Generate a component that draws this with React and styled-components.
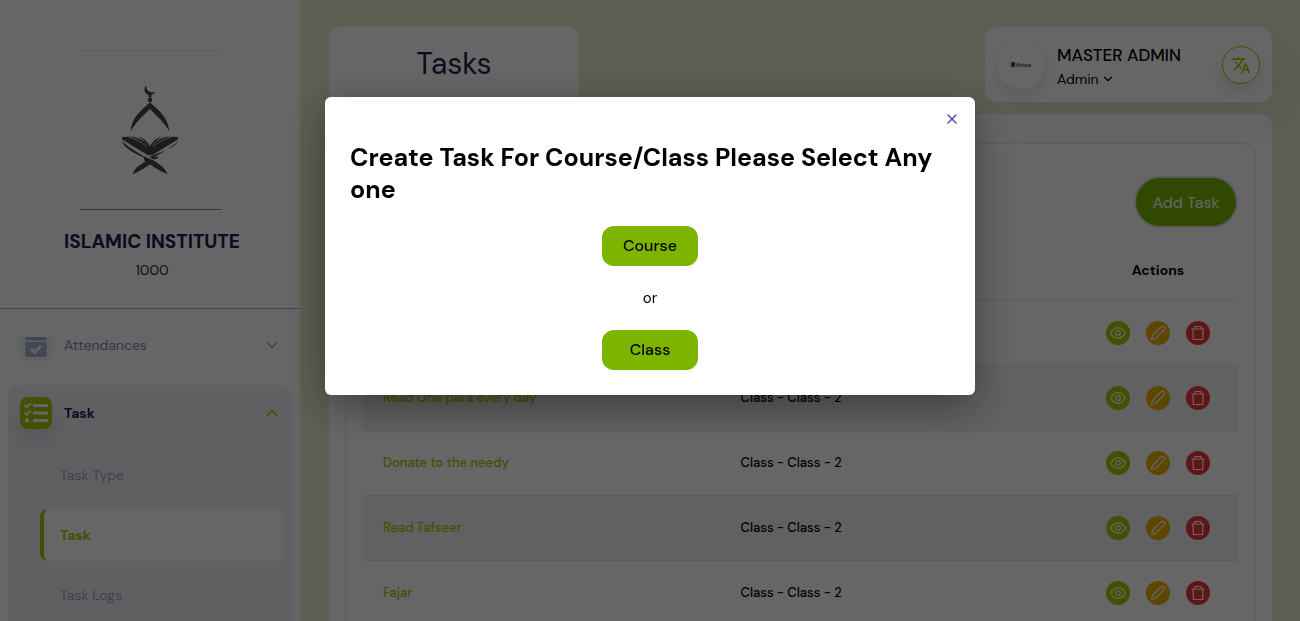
import React from "react";
import styled, { createGlobalStyle } from "styled-components";
import { ChevronDown, ChevronUp, X } from "lucide-react";
import { FaCalendarCheck, FaTasks } from "react-icons/fa";
import { MdTranslate } from "react-icons/md";

const tasks = [
  { name: "Read Quran", target: "Class - Class - 2" },
  { name: "Read One para every day", target: "Class - Class - 2" },
  { name: "Donate to the needy", target: "Class - Class - 2" },
  { name: "Read Tafseer", target: "Class - Class - 2" },
  { name: "Fajar", target: "Class - Class - 2" },
];

const subMenu = [
  { label: "Task Type" },
  { label: "Task", active: true },
  { label: "Task Logs" },
];

const InstituteLogo = () => (
  <svg width="144" height="160" viewBox="54 30 432 480" aria-hidden="true">
    <path d="M58 31.500H484" stroke="#ebebeb" strokeWidth="3" />
    <path d="M58 508.500H484" stroke="#8c8c8c" strokeWidth="3" />
    <g fill="#464646">
      <path d="M258 136C248 150 255 165 269 165C276 165 282 162 285 155C272 161 259 154 258 136Z" />
      <circle cx="270" cy="168" r="5" />
      <circle cx="270" cy="180" r="7" />
      <path d="M270 187C286 204 324 226 328 274C312 246 292 230 270 207C246 230 228 246 212 274C216 226 254 204 270 187Z" />
      <path d="M187 291L206 290C230 296 252 308 270 324C288 308 310 296 334 290L353 291L354 298C330 314 302 330 276 346L270 344L264 346C238 330 210 314 186 298Z" />
      <path d="M186 302C190 310 232 338 258 352C290 364 316 382 322 403C296 392 276 378 252 361V353C226 340 190 324 186 302Z" />
      <path d="M354 302C350 310 312 336 284 350L297 350L290 357L280 358L268 350C300 336 348 324 354 302Z" />
      <path d="M218 403C222 386 240 374 258 364L272 372C254 384 238 394 218 403Z" />
      <path d="M208 289C238 292 258 304 270 322L266 330C250 312 232 298 208 289Z" />
      <path d="M332 289C302 292 282 304 270 322L274 330C290 312 308 298 332 289Z" />
      <path d="M234 289C252 294 264 306 271 320L268 328C258 310 248 298 234 289Z" />
      <path d="M306 289C288 294 276 306 269 320L272 328C282 310 292 298 306 289Z" />
    </g>
    <g fill="none" stroke="#fff" strokeWidth="2">
      <path d="M206 291C232 298 250 310 260 322" />
      <path d="M334 291C308 298 290 310 280 322" />
      <path d="M226 290C246 296 256 306 262 316" />
      <path d="M314 290C294 296 284 306 278 316" />
    </g>
    <path d="M246 293C258 298 266 308 270 318C274 308 282 298 294 293V284H246Z" fill="#fff" />
  </svg>
);

const EyeIcon = () => (
  <svg width="16" height="16" viewBox="0 0 16 16" fill="none" stroke="currentColor" strokeWidth="1.200">
    <path d="M0.600 8C2.500 4.300 5 2.800 8 2.800S13.500 4.300 15.400 8C13.500 11.700 11 13.200 8 13.200S2.500 11.700 0.600 8Z" />
    <circle cx="8" cy="8" r="2.300" />
  </svg>
);

const PencilIcon = () => (
  <svg width="16" height="16" viewBox="0 0 16 16" fill="none" stroke="currentColor" strokeWidth="1.200" strokeLinejoin="round">
    <path d="M1.500 14.500L2.500 10.500L11.300 1.700Q12.700 0.600 14 2Q15.400 3.300 14.300 4.700L5.500 13.500Z" />
  </svg>
);

const TrashIcon = () => (
  <svg width="16" height="16" viewBox="0 0 16 16" fill="none" stroke="currentColor" strokeWidth="1.200">
    <path d="M1.500 4H14.500M5 4V1.500H11V4M3 4L3.300 14.500H12.700L13 4" />
  </svg>
);

const App = () => {
  return (
    <>
      <GlobalStyle />
      <Page>
        <Sidebar>
          <Brand>
            <InstituteLogo />
            <BrandName>ISLAMIC INSTITUTE</BrandName>
            <BrandCode>1000</BrandCode>
          </Brand>
          <MenuScroll>
            <MenuGroup $first>
              <MenuButton type="button">
                <IconBox>
                  <FaCalendarCheck size={24} />
                </IconBox>
                <MenuLabel>Attendances</MenuLabel>
                <ChevronDown size={18} strokeWidth={2} color="#a0a4ac" />
              </MenuButton>
            </MenuGroup>
            <MenuGroup $open>
              <MenuButton type="button">
                <IconBox $active>
                  <FaTasks size={24} />
                </IconBox>
                <MenuLabel $active>Task</MenuLabel>
                <ChevronUp size={18} strokeWidth={2} color="#a3ca00" />
              </MenuButton>
              <SubMenu>
                {subMenu.map((item) => (
                  <SubLink key={item.label} href="#" $active={item.active}>
                    {item.label}
                  </SubLink>
                ))}
              </SubMenu>
            </MenuGroup>
          </MenuScroll>
        </Sidebar>
        <Main>
          <Header>
            <PageTitle>Tasks</PageTitle>
            <UserCard>
              <Avatar>
                <AvatarMark />
                ifelse
              </Avatar>
              <UserText>
                <UserName>MASTER ADMIN</UserName>
                <RoleButton type="button">
                  Admin
                  <ChevronDown size={14} strokeWidth={2} />
                </RoleButton>
              </UserText>
              <LanguageButton type="button" aria-label="Change language">
                <MdTranslate size={20} />
              </LanguageButton>
            </UserCard>
          </Header>
          <ContentCard>
            <TableBox>
              <AddButton type="button">Add Task</AddButton>
              <Table>
                <thead>
                  <tr>
                    <HeadCell>Task</HeadCell>
                    <HeadCell>Course/Class</HeadCell>
                    <HeadCell $actions>Actions</HeadCell>
                  </tr>
                </thead>
                <tbody>
                  {tasks.map((task) => (
                    <Row key={task.name}>
                      <Cell $green>{task.name}</Cell>
                      <Cell>{task.target}</Cell>
                      <Cell>
                        <Actions>
                          <ActionButton type="button" $color="#a3ca00" aria-label="View">
                            <EyeIcon />
                          </ActionButton>
                          <ActionButton type="button" $color="#eab000" aria-label="Edit">
                            <PencilIcon />
                          </ActionButton>
                          <ActionButton type="button" $color="#f03838" aria-label="Delete">
                            <TrashIcon />
                          </ActionButton>
                        </Actions>
                      </Cell>
                    </Row>
                  ))}
                </tbody>
              </Table>
            </TableBox>
          </ContentCard>
        </Main>
      </Page>
      <Overlay>
        <Modal role="dialog" aria-modal="true" aria-labelledby="modal-title">
          <CloseButton type="button" aria-label="Close">
            <X size={16} strokeWidth={2} />
          </CloseButton>
          <ModalTitle id="modal-title">
            Create Task For Course/Class Please Select Any one
          </ModalTitle>
          <Choices>
            <ChoiceButton type="button">Course</ChoiceButton>
            <span>or</span>
            <ChoiceButton type="button">Class</ChoiceButton>
          </Choices>
        </Modal>
      </Overlay>
    </>
  );
};

const GlobalStyle = createGlobalStyle`
  * {
    box-sizing: border-box;
  }
  body {
    margin: 0;
    overflow: hidden;
    background: #ebecd0;
    color: #000;
    font-family: "DM Sans", Inter, "Liberation Sans", sans-serif;
    font-size: 14px;
  }
  button {
    padding: 0;
    border: none;
    background: none;
    color: inherit;
    font: inherit;
    cursor: pointer;
  }
`;
const Page = styled.div`
  display: flex;
  height: 100vh;
  overflow: hidden;
`;
const Sidebar = styled.aside`
  display: flex;
  flex-direction: column;
  flex: 0 0 300px;
  background: #fff;
`;
const Brand = styled.div`
  display: flex;
  flex-direction: column;
  align-items: center;
  padding: 50px 0 26px;
  border-bottom: 1px solid #a9a9c4;
`;
const BrandName = styled.div`
  margin-top: 18px;
  padding-left: 4px;
  font-size: 19px;
  font-weight: 800;
  line-height: 28px;
  color: #1b254b;
`;
const BrandCode = styled.div`
  padding: 2px 0 0 4px;
  font-size: 14px;
  line-height: 24px;
  color: #1b254b;
`;
const MenuScroll = styled.nav`
  flex: 1;
  margin-top: 28px;
  overflow: hidden;
`;
const MenuGroup = styled.div`
  margin: ${(props) => (props.$first ? "-20px 8px 12px" : "0 8px")};
  padding-bottom: ${(props) => (props.$open ? "12px" : "0")};
  border-radius: 12px;
  background: ${(props) => (props.$open ? "#edf1f6" : "transparent")};
`;
const MenuButton = styled.button`
  display: flex;
  align-items: center;
  gap: 12px;
  width: 100%;
  height: 56px;
  padding: 0 11px 0 12px;
  text-align: left;
`;
const IconBox = styled.span`
  display: flex;
  align-items: center;
  justify-content: center;
  width: 32px;
  height: 32px;
  border-radius: 8px;
  color: ${(props) => (props.$active ? "#fff" : "#a3aed0")};
  background: ${(props) => (props.$active ? "#a3ca00" : "#edf1f6")};
  box-shadow: ${(props) => (props.$active ? "0 12px 20px rgba(80, 90, 110, 0.18)" : "none")};
`;
const MenuLabel = styled.span`
  flex: 1;
  font-weight: ${(props) => (props.$active ? 700 : 400)};
  color: ${(props) => (props.$active ? "#1b254b" : "#8088bc")};
`;
const SubMenu = styled.div`
  display: flex;
  flex-direction: column;
  gap: 8px;
  padding: 8px 8px 0 32px;
`;
const SubLink = styled.a`
  display: flex;
  align-items: center;
  height: 52px;
  padding-left: 16px;
  border-left: 4px solid ${(props) => (props.$active ? "#a3ca00" : "transparent")};
  border-radius: 8px;
  background: ${(props) => (props.$active ? "#fff" : "transparent")};
  color: ${(props) => (props.$active ? "#a3ca00" : "#a0a4cc")};
  font-weight: ${(props) => (props.$active ? 700 : 400)};
  text-decoration: none;
`;
const Main = styled.main`
  flex: 1;
  min-width: 0;
  padding: 26px 28px 28px 29px;
`;
const Header = styled.header`
  display: flex;
  justify-content: space-between;
  align-items: flex-end;
`;
const PageTitle = styled.h1`
  width: 250px;
  margin: 0;
  border-radius: 12px;
  background: #fff;
  color: #1b254b;
  font-size: 30px;
  font-weight: 400;
  line-height: 76px;
  text-align: center;
`;
const UserCard = styled.div`
  display: flex;
  align-items: center;
  gap: 12px;
  width: 287px;
  height: 75px;
  padding: 0 12px;
  border-radius: 12px;
  background: #fff;
  box-shadow: 14px 17px 40px 4px rgba(112, 144, 176, 0.12);
`;
const Avatar = styled.div`
  display: flex;
  align-items: center;
  justify-content: center;
  gap: 1px;
  width: 48px;
  height: 48px;
  border-radius: 50%;
  background: #fff;
  box-shadow: 0 8px 16px rgba(60, 70, 80, 0.15);
  color: #555;
  font-size: 6px;
  font-weight: 700;
`;
const AvatarMark = styled.span`
  width: 4px;
  height: 5px;
  background: linear-gradient(135deg, #e0457b 30%, #333 50%, #2f9be0 80%);
`;
const UserText = styled.div`
  flex: 1;
  padding-top: 4px;
  white-space: nowrap;
`;
const UserName = styled.div`
  font-size: 17px;
  font-weight: 500;
  line-height: 24px;
`;
const RoleButton = styled.button`
  display: flex;
  align-items: center;
  gap: 2px;
  line-height: 24px;
`;
const LanguageButton = styled.button`
  display: flex;
  align-items: center;
  justify-content: center;
  width: 38px;
  height: 38px;
  border: 1px solid #a3ca00;
  border-radius: 50%;
  color: #a3ca00;
  box-shadow: 0 8px 16px rgba(60, 70, 80, 0.15);
`;
const ContentCard = styled.section`
  margin-top: 12px;
  padding: 28px 16px;
  border-radius: 12px;
  background: #fff;
`;
const TableBox = styled.div`
  display: flex;
  flex-direction: column;
  padding: 32px 16px 16px;
  border: 2px solid #edf0f4;
  border-radius: 12px;
`;
const AddButton = styled.button`
  align-self: flex-end;
  width: 104px;
  height: 52px;
  border: 2px solid #e2e4e8;
  border-radius: 26px;
  background: #7cb400;
  color: #fff;
  font-size: 16px;
`;
const Table = styled.table`
  width: 100%;
  margin-top: 12px;
  border-collapse: collapse;
  table-layout: fixed;
`;
const HeadCell = styled.th`
  width: ${(props) => (props.$actions ? "160px" : "auto")};
  height: 60px;
  padding: 0 20px;
  border-bottom: 1px solid #e2e5e9;
  font-weight: 700;
  text-align: ${(props) => (props.$actions ? "center" : "left")};
`;
const Row = styled.tr`
  &:nth-child(even) {
    background: #f2f2f2;
  }
`;
const Cell = styled.td`
  height: 65px;
  padding: 0 20px;
  border-bottom: 1px solid #e2e5e9;
  font-size: 13px;
  font-weight: 500;
  color: ${(props) => (props.$green ? "#a3ca00" : "#000")};
`;
const Actions = styled.div`
  display: flex;
  justify-content: center;
  gap: 16px;
`;
const ActionButton = styled.button`
  display: flex;
  align-items: center;
  justify-content: center;
  width: 24px;
  height: 24px;
  border-radius: 50%;
  background: ${(props) => props.$color};
  color: #fff;
`;
const Overlay = styled.div`
  position: fixed;
  inset: 0;
  display: flex;
  justify-content: center;
  align-items: flex-start;
  padding-top: 97px;
  background: rgba(0, 0, 0, 0.6);
`;
const Modal = styled.div`
  position: relative;
  width: 50%;
  padding: 45px 25px 25px;
  border-radius: 6px;
  background: #fff;
  box-shadow: 0 10px 40px rgba(0, 0, 0, 0.4);
`;
const CloseButton = styled.button`
  position: absolute;
  top: 14px;
  right: 15px;
  display: flex;
  color: #5048b0;
`;
const ModalTitle = styled.h2`
  margin: 0;
  font-size: 25px;
  font-weight: 700;
  line-height: 32px;
`;
const Choices = styled.div`
  display: flex;
  flex-direction: column;
  align-items: center;
  gap: 20px;
  margin-top: 20px;
  font-size: 15px;
  line-height: 24px;
`;
const ChoiceButton = styled.button`
  width: 96px;
  height: 40px;
  border-radius: 12px;
  background: #7cb400;
  font-size: 16px;
  font-weight: 500;
`;
export default App;
